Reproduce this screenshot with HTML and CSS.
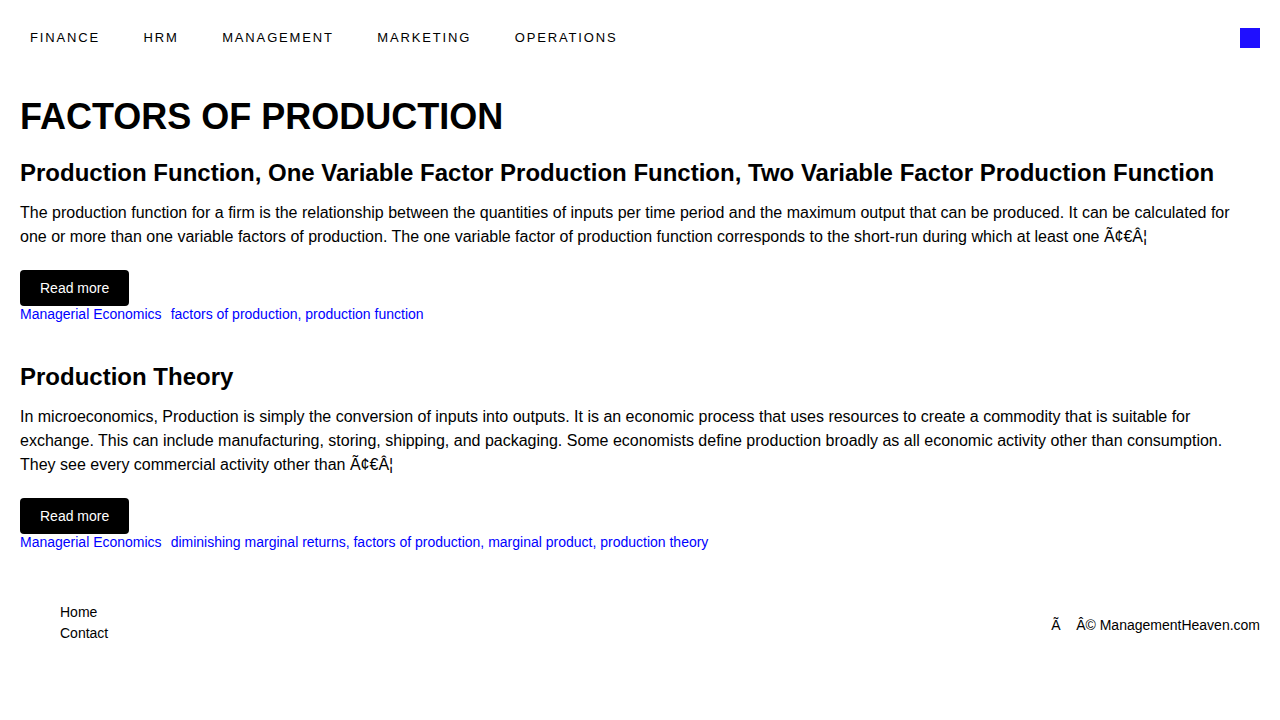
FILE: index.html
```html
<!DOCTYPE html>
<html lang="en">
<head>
<meta charset="utf-8">
<title>Factors of Production</title>
<link rel="stylesheet" href="styles.css">
</head>
<body>
<header class="site-header">
  <nav class="main-nav">
    <a href="#">FINANCE</a>
    <a href="#">HRM</a>
    <a href="#">MANAGEMENT</a>
    <a href="#">MARKETING</a>
    <a href="#">OPERATIONS</a>
  </nav>
  <span class="menu-square"></span>
</header>
<main class="content">
  <h1 class="page-title">FACTORS OF PRODUCTION</h1>
  <article class="post">
    <h2 class="post-title">Production Function, One Variable Factor Production Function, Two Variable Factor Production Function</h2>
    <p class="post-excerpt">The production function for a firm is the relationship between the quantities of inputs per time period and the maximum output that can be produced. It can be calculated for one or more than one variable factors of production. The one variable factor of production function corresponds to the short-run during which at least one Ã¢€Â¦</p>
    <a class="btn" href="#">Read more</a>
    <div class="post-meta"><a href="#" class="cat">Managerial Economics</a><a href="#">factors of production</a>, <a href="#">production function</a></div>
  </article>
  <article class="post">
    <h2 class="post-title">Production Theory</h2>
    <p class="post-excerpt">In microeconomics, Production is simply the conversion of inputs into outputs. It is an economic process that uses resources to create a commodity that is suitable for exchange. This can include manufacturing, storing, shipping, and packaging. Some economists define production broadly as all economic activity other than consumption. They see every commercial activity other than Ã¢€Â¦</p>
    <a class="btn" href="#">Read more</a>
    <div class="post-meta"><a href="#" class="cat">Managerial Economics</a><a href="#">diminishing marginal returns</a>, <a href="#">factors of production</a>, <a href="#">marginal product</a>, <a href="#">production theory</a></div>
  </article>
</main>
<footer class="site-footer">
  <ul class="footer-links">
    <li><a href="#">Home</a></li>
    <li><a href="#">Contact</a></li>
  </ul>
  <div class="copyright">Ã&nbsp;&nbsp;&nbsp;&nbsp;Â© ManagementHeaven.com</div>
</footer>
</body>
</html>
```
FILE: styles.css
```css
* { box-sizing: border-box; }
body {
  margin: 0;
  font-family: "Liberation Sans", Arial, sans-serif;
  color: #000;
  background: #fff;
}
a { text-decoration: none; color: inherit; }

.site-header {
  height: 75px;
  padding: 0 20px 0 30px;
  display: flex;
  align-items: center;
  justify-content: space-between;
}
.main-nav {
  display: flex;
  gap: 43.5px;
}
.main-nav a {
  font-size: 13px;
  letter-spacing: 1.85px;
  color: #000;
}
.menu-square {
  width: 20px;
  height: 20px;
  background: #1f0fff;
}

.content {
  padding: 0 20px;
}
.page-title {
  font-size: 36px;
  line-height: 43px;
  font-weight: bold;
  margin: 20px 0 20px;
}
.post {
  margin-bottom: 40px;
}
.post-title {
  font-size: 24px;
  line-height: 29px;
  font-weight: bold;
  margin: 0 0 14px;
}
.post-excerpt {
  font-size: 16px;
  line-height: 24px;
  margin: 0 0 21px;
}
.btn {
  display: inline-block;
  height: 36px;
  line-height: 36px;
  padding: 0 20px;
  background: #000;
  color: #fff;
  font-size: 14px;
  border-radius: 4px;
}
.post-meta {
  font-size: 14px;
  line-height: 16px;
  color: #0000ff;
}
.post-meta .cat { margin-right: 9px; }

.site-footer {
  margin-top: 52px;
  padding: 0 20px;
  display: flex;
  align-items: center;
  justify-content: space-between;
  font-size: 14px;
}
.footer-links {
  list-style: none;
  margin: 0;
  padding: 0 0 0 40px;
  line-height: 21px;
}
.copyright {
  padding-top: 4px;
}
```
